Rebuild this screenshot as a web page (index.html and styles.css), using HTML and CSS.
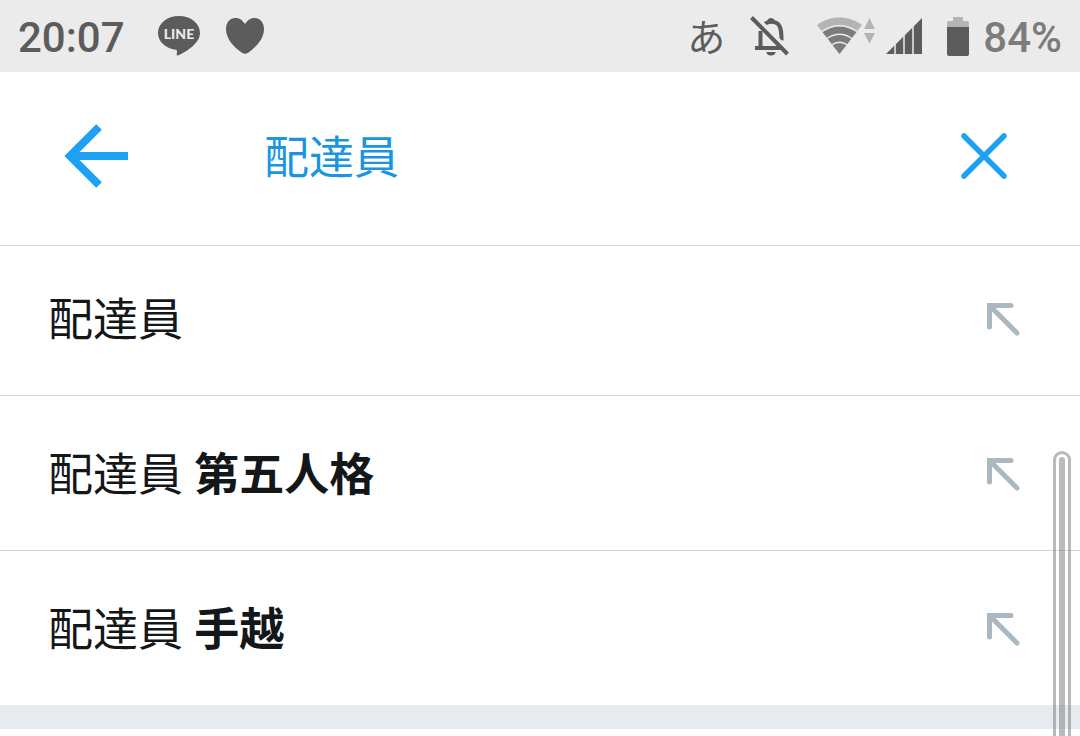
FILE: index.html
```html
<!DOCTYPE html>
<html lang="ja">
<head>
<meta charset="utf-8">
<meta name="viewport" content="width=device-width, initial-scale=1">
<title>検索</title>
<link rel="stylesheet" href="styles.css">
</head>
<body>
<div class="screen">
  <div class="status">
    <span class="clock">20:07</span>
    <svg class="line-icon" width="44" height="44" viewBox="0 0 44 44" aria-hidden="true">
      <path d="M22 2C10 2 1 9.400 1 19c0 8.500 7.500 15.300 17.500 16.700 1.500.3 1.700.8 1.500 2.300l-.3 2.300c-.1 1.300.7 1.500 1.800 1C26 39.300 43 30.500 43 19 43 9.400 34 2 22 2z" fill="#5c5c5c"/>
      <text class="line-text" x="22" y="25" text-anchor="middle">LINE</text>
    </svg>
    <svg class="heart" width="40" height="38" viewBox="0 0 40 38" aria-hidden="true">
      <path d="M20 7C17 2.500 14 1 10.500 1 5 1 1 5.500 1 12c0 10 8 18 15.500 23.500 2.500 1.700 4.500 1.700 7 0C31 30 39 22 39 12 39 5.500 35 1 29.500 1 26 1 23 2.500 20 7z" fill="#5c5c5c"/>
    </svg>
    <span class="ime">あ</span>
    <svg class="bell" width="40" height="42" viewBox="0 0 40 42" aria-hidden="true" fill="none" stroke="#5c5c5c">
      <path d="M10.500 16v16M5 33h28" stroke-width="4"/>
      <path d="M14.500 9C18 6 25 5.500 28.500 9.500 31 12.500 31.500 16 31.500 25.500" stroke-width="4"/>
      <path d="M17.500 8V5a4 4 0 0 1 7 0v3zM16.500 37h9a4.500 3.500 0 0 1-9 0z" fill="#5c5c5c" stroke="none"/>
      <path d="M4.500.5l36 37" stroke="#ebebeb" stroke-width="4"/>
      <path d="M1.500 2.500l36 36.500" stroke-width="4"/>
    </svg>
    <svg class="wifi" width="60" height="40" viewBox="0 0 60 40" aria-hidden="true">
      <path d="M1 9C14-1 33-1 46 9L23.500 38z" fill="#b4b4b4"/>
      <path d="M6.500 16C17 8.500 30 8.500 40.500 16L23.500 38z" fill="#7c7c7c"/>
      <path d="M6 15.500C17 7.800 30 7.800 41 15.500M11 22.500c8-5.500 17-5.500 25 0M15.500 29c5-3.500 11-3.500 16 0" fill="none" stroke="#ebebeb" stroke-width="1.500"/>
      <path d="M48 13l5.500-11L59 13zM48 17h11l-5.500 10.500z" fill="#b4b4b4"/>
    </svg>
    <svg class="signal" width="36" height="36" viewBox="0 0 36 36" aria-hidden="true">
      <path d="M0 36L36 0v36z" fill="#5c5c5c"/>
      <path d="M9 20v16M18 12v24M27 4v32" stroke="#ebebeb" stroke-width="1.500"/>
    </svg>
    <svg class="battery" width="22" height="39" viewBox="0 0 22 39" aria-hidden="true">
      <path d="M6 0h10v4h4q2 0 2 2v5H0V6q0-2 2-2h4z" fill="#b4b4b4"/>
      <path d="M0 10h22v27q0 2-2 2H2q-2 0-2-2z" fill="#5c5c5c"/>
    </svg>
    <span class="percent">84%</span>
  </div>

  <form class="search" role="search">
    <button class="icon-button" type="button" aria-label="戻る">
      <svg width="64" height="64" viewBox="0 0 64 64" fill="none" stroke="#1da1f2" stroke-width="8"><path d="M35 3L6 32l29 29M8 32h56"/></svg>
    </button>
    <input class="query" type="text" aria-label="検索" value="配達員">
    <button class="icon-button" type="button" aria-label="クリア">
      <svg width="48" height="48" viewBox="0 0 48 48" fill="none" stroke="#1da1f2" stroke-width="5.500" stroke-linecap="round"><path d="M4 4l40 40M44 4L4 44"/></svg>
    </button>
  </form>

  <ul class="suggestions">
    <li class="row">
      <a class="term" href="#">配達員</a>
      <button class="icon-button" type="button" aria-label="配達員を入力">
        <svg width="34" height="34" viewBox="0 0 34 34" fill="none" stroke="#aab8c2" stroke-width="5" stroke-linecap="round"><path d="M3.500 25V3.500H25M4 4l27 27"/></svg>
      </button>
    </li>
    <li class="row">
      <a class="term" href="#">配達員 <b>第五人格</b></a>
      <button class="icon-button" type="button" aria-label="配達員 第五人格を入力">
        <svg width="34" height="34" viewBox="0 0 34 34" fill="none" stroke="#aab8c2" stroke-width="5" stroke-linecap="round"><path d="M3.500 25V3.500H25M4 4l27 27"/></svg>
      </button>
    </li>
    <li class="row">
      <a class="term" href="#">配達員 <b>手越</b></a>
      <button class="icon-button" type="button" aria-label="配達員 手越を入力">
        <svg width="34" height="34" viewBox="0 0 34 34" fill="none" stroke="#aab8c2" stroke-width="5" stroke-linecap="round"><path d="M3.500 25V3.500H25M4 4l27 27"/></svg>
      </button>
    </li>
  </ul>
  <div class="divider"></div>
  <div class="scroll-thumb" aria-hidden="true"></div>
</div>
</body>
</html>
```
FILE: styles.css
```css
* { box-sizing: border-box; }

body {
  margin: 0;
  background: #fff;
  color: #14171a;
  font-family: Roboto, "Noto Sans CJK JP", sans-serif;
  font-size: 45px;
}

.screen {
  position: relative;
  min-height: 100vh;
  overflow: hidden;
}

svg { display: block; flex: none; }

.status {
  display: flex;
  align-items: center;
  padding: 0 18px;
  height: 72px;
  background: #ebebeb;
  color: #5c5c5c;
  font-size: 42px;
  font-weight: 500;
  line-height: 72px;
}

.clock, .percent { padding-top: 3px; }
.line-icon { margin-left: 32px; }
.line-text { fill: #ebebeb; font-family: Lato, sans-serif; font-size: 14px; font-weight: 900; }
.heart { margin-left: 24px; }
.ime { margin-left: auto; padding-top: 3px; font-size: 38px; font-weight: 400; }
.bell { margin-left: 25px; }
.wifi { margin-left: 26px; }
.signal { margin-left: 10px; }
.battery { margin-left: 25px; }
.percent { margin-left: 14px; color: #7c7c7c; }

.search {
  display: flex;
  align-items: center;
  height: 174px;
  padding: 0 72px 5px 64px;
  border-bottom: 1px solid #ccd6dd;
}

.icon-button {
  flex: none;
  padding: 0;
  border: 0;
  background: none;
}

.query {
  flex: 1;
  min-width: 0;
  margin: 0 24px 0 136px;
  padding: 0 0 4px;
  border: 0;
  outline: 0;
  background: none;
  color: #1b95e0;
  font: inherit;
}

.suggestions {
  margin: 0;
  padding: 0;
  list-style: none;
}

.row {
  display: flex;
  align-items: center;
  justify-content: space-between;
  height: 155px;
  padding: 1px 60px 0 48px;
  border-bottom: 1px solid #ccd6dd;
}

.row:first-child { height: 150px; padding-top: 0; padding-bottom: 3px; }
.row:last-child { height: 154px; border-bottom: 0; }

.term {
  padding-bottom: 5px;
  color: inherit;
  text-decoration: none;
}

.term b { font-weight: 700; }

.divider {
  height: 24px;
  background: #e6ebf0;
}

.scroll-thumb {
  position: absolute;
  top: 451px;
  right: 9px;
  bottom: 0;
  width: 18px;
  border: 3px solid rgba(130, 130, 130, 0.55);
  border-bottom: 0;
  border-radius: 9px 9px 0 0;
}

.scroll-thumb::before {
  content: "";
  position: absolute;
  inset: 3px 3px 0;
  border-radius: 3px 3px 0 0;
  background: rgba(130, 130, 130, 0.55);
}
```
